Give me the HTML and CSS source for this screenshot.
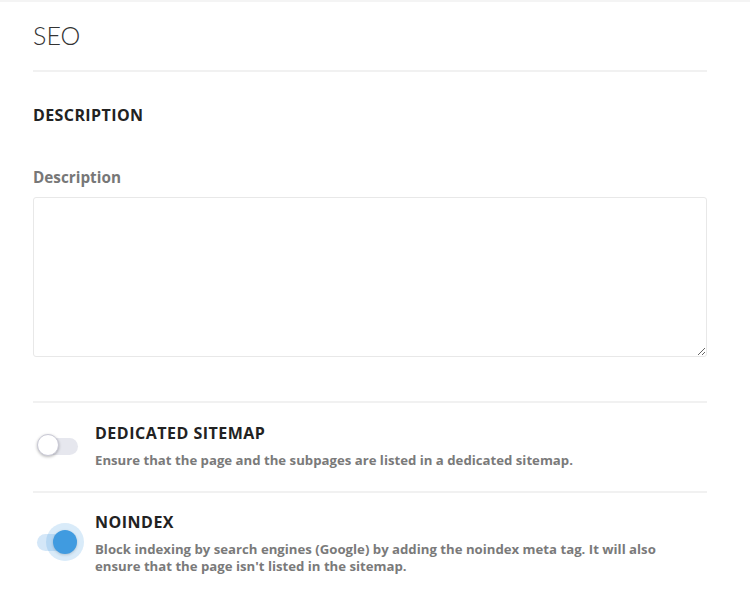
FILE: index.html
```html
<!DOCTYPE html>
<html>
<head>
<meta charset="utf-8">
<link rel="stylesheet" href="styles.css">
</head>
<body>
<div class="page">
  <h1 class="title">SEO</h1>
  <hr class="rule">
  <h2 class="section">DESCRIPTION</h2>
  <label class="label">Description</label>
  <textarea class="area"></textarea>
  <hr class="rule rule-toggles">
  <div class="option">
    <div class="switch off"><span class="track"></span><span class="knob"></span></div>
    <div class="option-text">
      <div class="option-title">DEDICATED SITEMAP</div>
      <div class="option-desc">Ensure that the page and the subpages are listed in a dedicated sitemap.</div>
    </div>
  </div>
  <hr class="rule rule-flat">
  <div class="option">
    <div class="switch on"><span class="track"></span><span class="knob"></span></div>
    <div class="option-text">
      <div class="option-title">NOINDEX</div>
      <div class="option-desc">Block indexing by search engines (Google) by adding the noindex meta tag. It will also ensure that the page isn't listed in the sitemap.</div>
    </div>
  </div>
</div>
</body>
</html>
```

FILE: styles.css
```css
html, body {
  margin: 0;
  padding: 0;
  background: #fff;
}
body {
  font-family: "Open Sans", Lato, sans-serif;
  color: #222;
  border-top: 2px solid #f4f4f4;
  height: 593px;
  overflow: hidden;
}
.page {
  padding: 0 43px 0 33px;
}
.title {
  margin: 0;
  padding-top: 19px;
  font-family: Lato, "Open Sans", sans-serif;
  font-size: 25px;
  font-weight: 300;
  line-height: 28px;
  color: #333;
}
.rule {
  border: 0;
  height: 2px;
  background: #f1f1f1;
  margin: 21px 0 0;
}
.section {
  margin: 33px 0 0;
  font-size: 16px;
  font-weight: 700;
  letter-spacing: 0.4px;
  line-height: 20px;
  color: #222;
}
.label {
  display: block;
  margin-top: 42px;
  font-size: 15.3px;
  font-weight: 700;
  color: #777;
  line-height: 20px;
}
.area {
  display: block;
  box-sizing: border-box;
  width: 100%;
  height: 160px;
  margin-top: 10px;
  border: 1px solid #e8e8e8;
  border-radius: 3px;
  resize: vertical;
  font-family: inherit;
}
.rule-toggles {
  margin-top: 44px;
}
.rule-flat {
  margin-top: 0;
}
.option {
  display: flex;
  gap: 17px;
  padding: 20px 0 22px;
}
.option + .rule-flat + .option {
  padding-top: 19px;
}
.switch {
  position: relative;
  width: 45px;
  flex: 0 0 45px;
  margin-top: 10px;
}
.track {
  position: absolute;
  left: 5px;
  top: 5px;
  width: 40px;
  height: 17px;
  border-radius: 9px;
  background: #e6e7ee;
}
.knob {
  position: absolute;
  left: 4px;
  top: 1px;
  width: 22px;
  height: 22px;
  border-radius: 50%;
  box-sizing: border-box;
  background: #fff;
  border: 1px solid #c9c9d6;
  box-shadow: 0 1px 3px rgba(0,0,0,0.28);
}
.switch.on {
  margin-top: 17px;
}
.switch.on .track {
  left: 4px;
  background: #d4e7f8;
}
.switch.on .knob {
  left: 20px;
  top: 1px;
  border: 0;
  width: 24px;
  height: 24px;
  background: #409be0;
  box-shadow: 0 0 0 7px rgba(64,155,224,0.2), 0 1px 3px rgba(0,0,0,0.2);
}
.option-title {
  font-size: 16px;
  font-weight: 700;
  letter-spacing: 0.5px;
  line-height: 20px;
  color: #222;
}
.option-desc {
  max-width: 590px;
  margin-top: 9px;
  font-size: 13.2px;
  font-weight: 700;
  line-height: 17px;
  color: #7a7a7a;
}
```
